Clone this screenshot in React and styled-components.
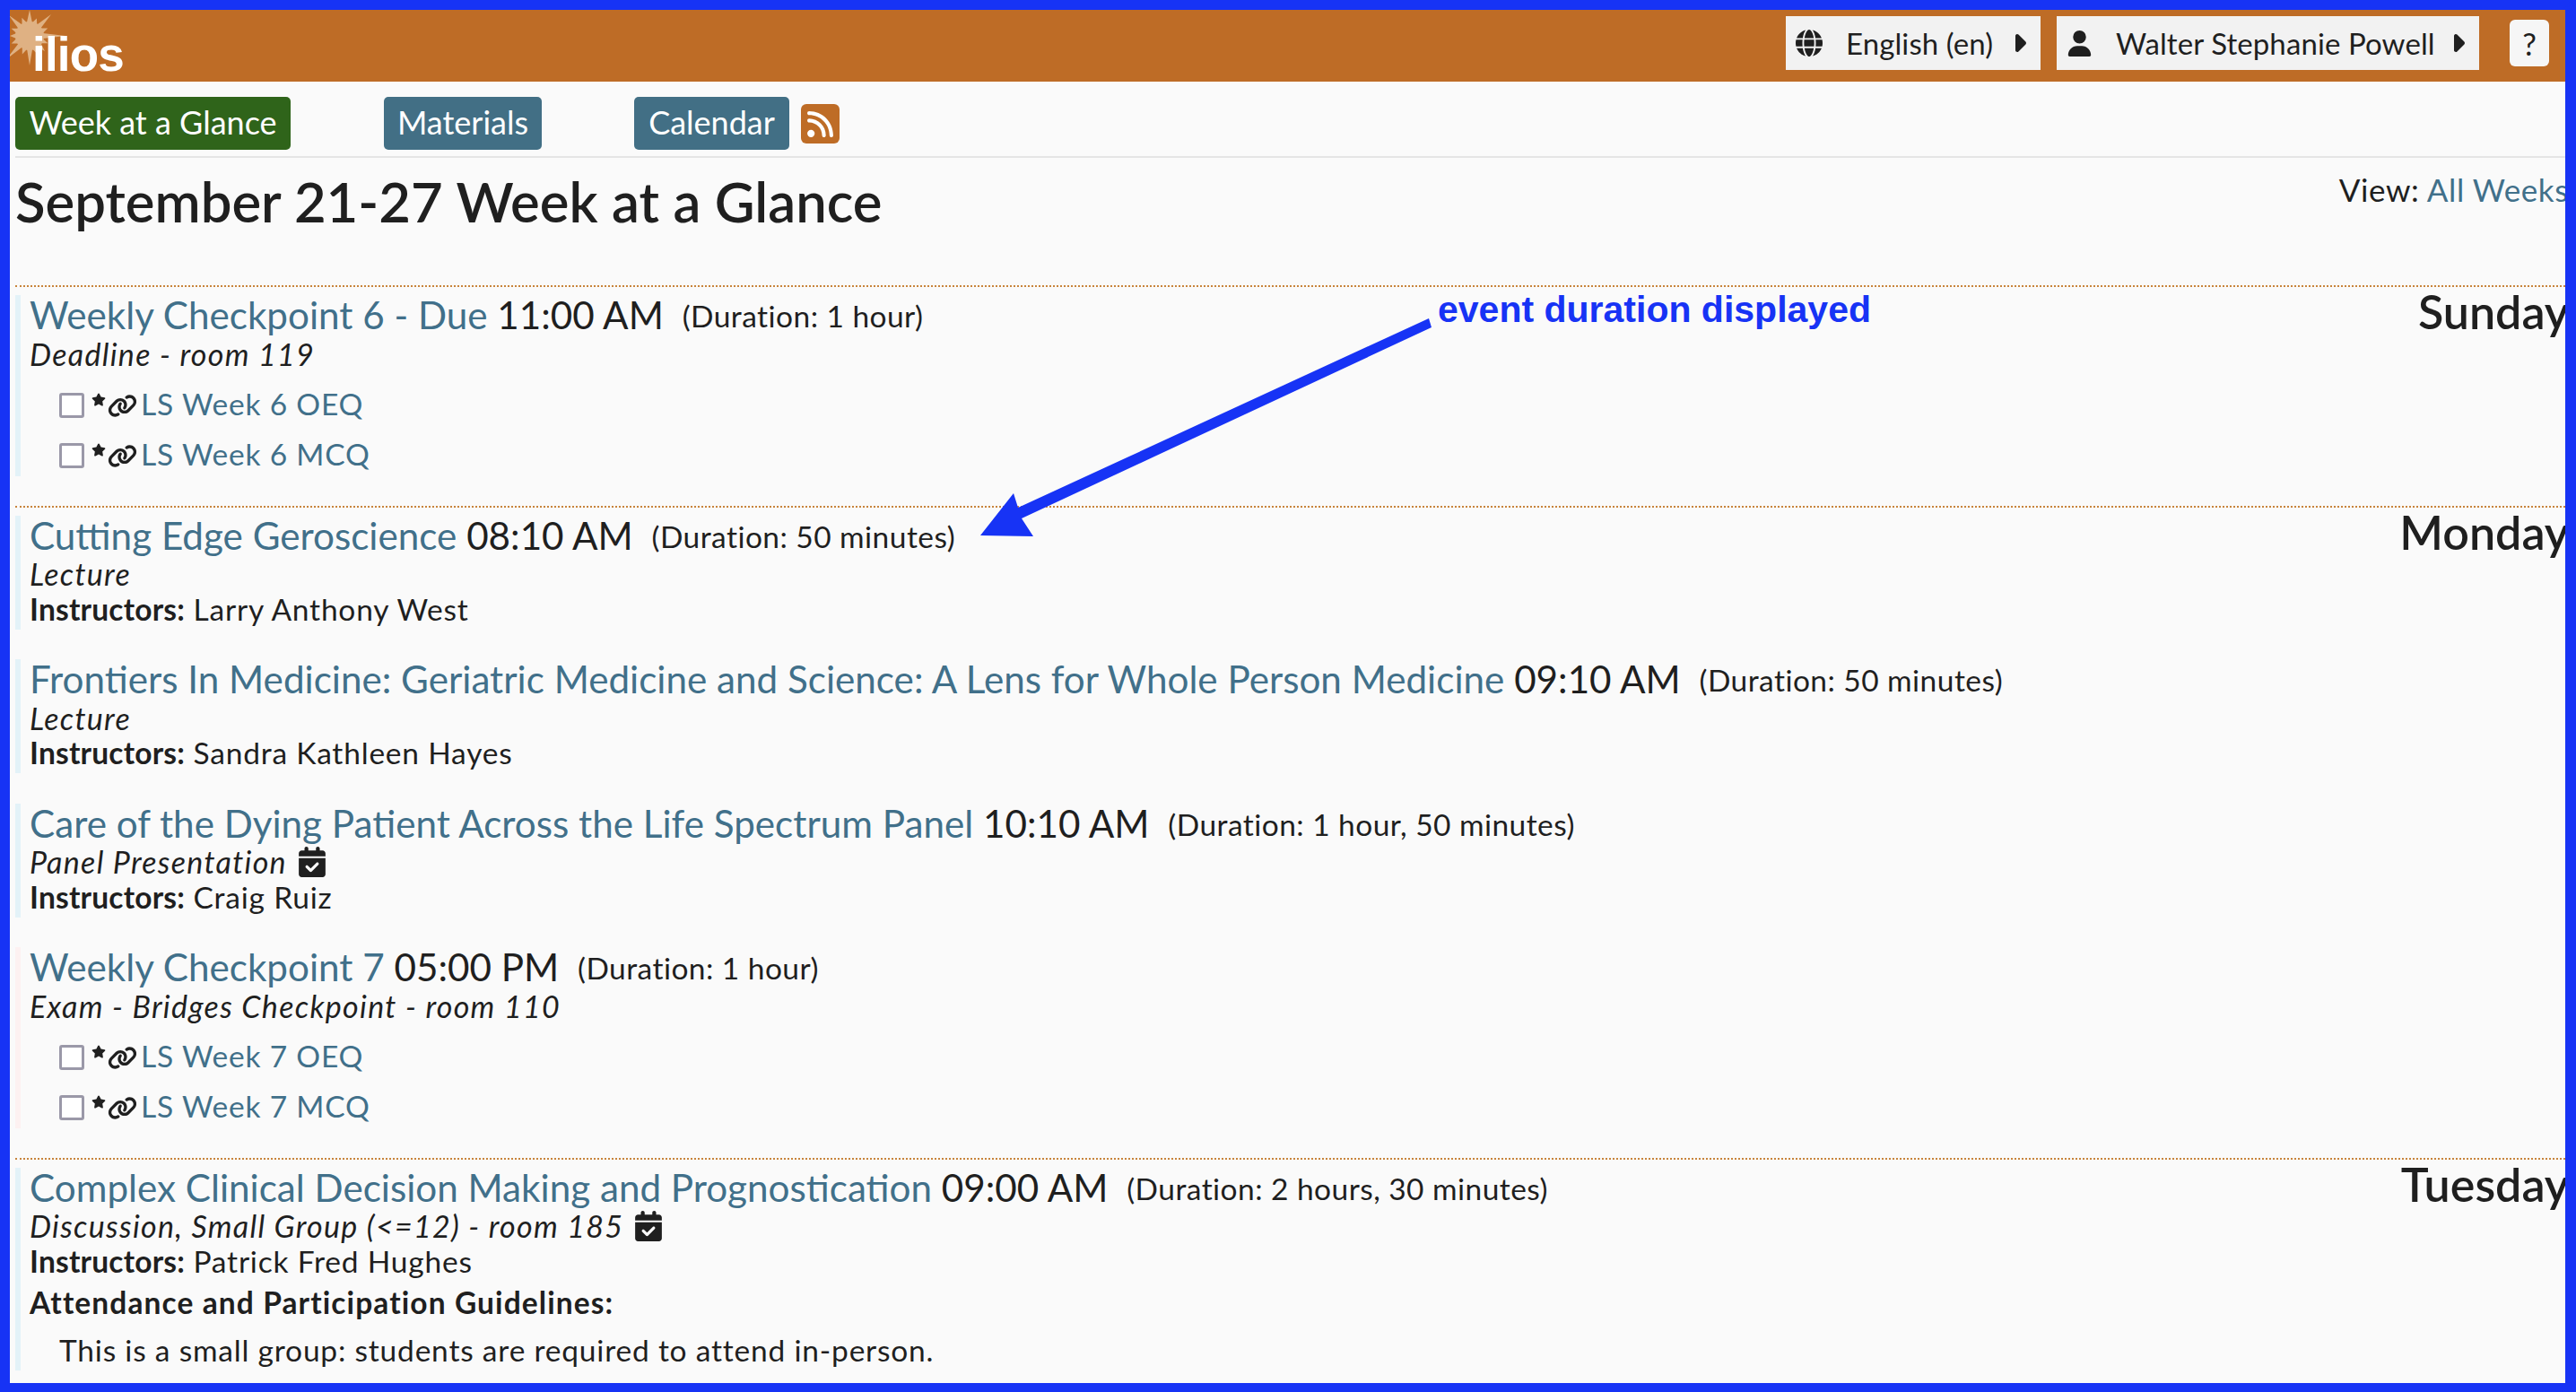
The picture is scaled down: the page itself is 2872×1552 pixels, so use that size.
import styled, { createGlobalStyle } from "styled-components";
import { FaCalendarCheck, FaCaretRight, FaGlobe, FaLink, FaRss, FaStar, FaUser } from "react-icons/fa6";

const BLUE = "#1733f5";
const LINK = "#41708a";
const INK = "#1f1f1f";

const GlobalStyle = createGlobalStyle`
  html, body { margin: 0; padding: 0; background: #fafafa; }
  body { font-family: Lato, "Noto Sans", sans-serif; color: ${INK}; }
`;

const Frame = styled.div`
  position: relative;
  box-sizing: border-box;
  width: 2872px;
  height: 1552px;
  border: solid ${BLUE};
  border-width: 11px 12px 10px 11px;
  overflow: hidden;
  background: #fafafa;
`;

const Header = styled.header`
  display: flex;
  align-items: flex-start;
  justify-content: space-between;
  height: 80px;
  background: #be6c26;
`;

const Logo = styled.div`
  position: relative;
  padding: 20px 0 0 25px;
  font: bold 53px/60px "Liberation Sans", sans-serif;
  color: #fff;
  letter-spacing: -0.8px;
`;

const Sun = styled.svg`
  position: absolute;
  left: 0;
  top: 0;
  width: 64px;
  height: 64px;
`;

const LogoText = styled.span`
  position: relative;
`;

const HeaderTools = styled.div`
  display: flex;
  align-items: flex-start;
  padding: 7px 18px 0 0;
`;

const MenuButton = styled.div`
  display: flex;
  align-items: center;
  box-sizing: border-box;
  width: ${(p) => p.$width}px;
  height: 60px;
  margin-right: ${(p) => p.$gap}px;
  padding: 0 8px 0 11px;
  background: #f2f2f2;
  font-size: 33px;
  white-space: nowrap;
`;

const MenuLabel = styled.span`
  flex: 1;
  padding-left: ${(p) => p.$indent}px;
  letter-spacing: 0.1px;
`;

const HelpButton = styled.div`
  display: flex;
  align-items: center;
  justify-content: center;
  width: 44px;
  height: 52px;
  margin-top: 4px;
  border-radius: 6px;
  background: #f6f6f6;
  font-size: 35px;
`;

const Content = styled.main`
  padding-left: 6px;
`;

const Nav = styled.nav`
  display: flex;
  align-items: flex-start;
  height: 66px;
  padding-top: 17px;
  border-bottom: 2px solid #e5e5e5;
`;

const NavButton = styled.div`
  display: flex;
  align-items: center;
  justify-content: center;
  box-sizing: border-box;
  width: ${(p) => p.$width}px;
  height: 59px;
  margin-left: ${(p) => p.$gap}px;
  padding-bottom: 3px;
  border-radius: 5px;
  background: ${(p) => (p.$active ? "#2f641a" : "#426f85")};
  color: #fff;
  font-size: 36px;
`;

const RssButton = styled.div`
  display: flex;
  align-items: center;
  justify-content: center;
  width: 43px;
  height: 44px;
  margin: 8px 0 0 13px;
  border-radius: 6px;
  background: #be6c26;
  color: #fff;
  font-size: 33px;
`;

const TitleRow = styled.div`
  display: flex;
  justify-content: space-between;
  height: 142px;
  margin-right: -4px;
`;

const Heading = styled.h1`
  margin: 12px 0 0;
  font-size: 61.6px;
  line-height: 72px;
  font-weight: 600;
`;

const ViewLink = styled.div`
  margin-top: 13px;
  font-size: 35px;
  line-height: 44px;
  letter-spacing: 0.6px;
  white-space: nowrap;
`;

const Link = styled.span`
  color: ${LINK};
`;

const Day = styled.section`
  display: flex;
  justify-content: space-between;
  margin: 0 -4px ${(p) => p.$after}px 0;
  padding-top: 9px;
  border-top: 2px dotted #c8843c;
`;

const Events = styled.div`
  display: flex;
  flex-direction: column;
  gap: 33.5px;
`;

const Event = styled.article`
  padding: 0 0 3.5px 10px;
  border-left: 6px solid ${(p) => (p.$exam ? "#fdf1f1" : "#e3f2f8")};
  font-size: 33.5px;
  line-height: 38.5px;
  letter-spacing: 0.8px;
`;

const EventTitle = styled.div`
  height: 46.5px;
  line-height: 43px;
  font-size: 42.2px;
  letter-spacing: 0;
  white-space: nowrap;
`;

const Duration = styled.span`
  margin-left: 10px;
  font-size: 33.5px;
  letter-spacing: 0.45px;
  vertical-align: 2px;
`;

const EventType = styled.div`
  display: flex;
  align-items: center;
  gap: 11px;
  font-size: 34px;
  font-style: italic;
  letter-spacing: 1.3px;
`;

const Strong = styled.strong`
  font-weight: 700;
  letter-spacing: 0.2px;
`;

const Guidelines = styled.div`
  margin-top: 8px;
  font-weight: 700;
  line-height: 38px;
  letter-spacing: 1.1px;
`;

const GuidelineText = styled.p`
  margin: 15px 0 0;
  padding-left: 33px;
`;

const QuizList = styled.div`
  display: flex;
  flex-direction: column;
  gap: 16px;
  margin: 18px 0 -1px;
`;

const Quiz = styled.label`
  display: flex;
  align-items: center;
  height: 40px;
  padding-left: 33px;
`;

const Check = styled.input`
  appearance: none;
  box-sizing: border-box;
  width: 28px;
  height: 28px;
  margin: 0 8px 0 0;
  border: 3px solid #9a98a8;
  border-radius: 3px;
  background: #fff;
`;

const StarMark = styled(FaStar)`
  width: 16px;
  height: 15px;
  margin: -14px 2px 0 0;
`;

const LinkMark = styled(FaLink)`
  width: 33px;
  height: 27px;
  margin-right: 4px;
`;

const QuizLabel = styled(Link)`
  padding-bottom: 3px;
`;

const DayName = styled.div`
  margin-top: -10px;
  font-size: 52px;
  line-height: 56px;
  font-weight: 600;
`;

const Annotation = styled.div`
  position: absolute;
  left: 1592px;
  top: 310px;
  font: bold 41px/48px "Liberation Sans", sans-serif;
  color: ${BLUE};
  white-space: nowrap;
`;

const Arrow = styled.svg`
  position: absolute;
  left: -11px;
  top: -11px;
  width: 2872px;
  height: 1552px;
  pointer-events: none;
`;

// rays of the logo sun: angle in degrees from north, length in px
const RAYS = [
  [0, 29], [22, 21], [45, 34], [67, 22], [90, 40], [112, 22], [135, 24], [157, 22],
  [180, 33], [202, 22], [225, 36], [247, 22], [270, 22], [292, 22], [315, 33], [337, 22],
];

function sunPoints() {
  const pts = [];
  RAYS.forEach(([angle, length]) => {
    const a = (angle * Math.PI) / 180;
    pts.push([22 + Math.sin(a) * length, 29 - Math.cos(a) * length]);
    const b = ((angle + 11) * Math.PI) / 180;
    pts.push([22 + Math.sin(b) * 15, 29 - Math.cos(b) * 15]);
  });
  return pts.map((p) => p.map((v) => v.toFixed(1)).join(",")).join(" ");
}

function QuizRow({ label }) {
  return (
    <Quiz>
      <Check type="checkbox" />
      <StarMark />
      <LinkMark />
      <QuizLabel>{label}</QuizLabel>
    </Quiz>
  );
}

function EventHead({ title, time, duration }) {
  return (
    <EventTitle>
      <Link>{title}</Link> {time} <Duration>(Duration: {duration})</Duration>
    </EventTitle>
  );
}

function App() {
  return (
    <>
      <GlobalStyle />
      <Frame>
        <Header>
          <Logo>
            <Sun viewBox="0 0 64 64">
              <polygon points={sunPoints()} fill="#dfb183" />
              <circle cx="22" cy="29" r="16" fill="#dfb183" />
            </Sun>
            <LogoText>ilios</LogoText>
          </Logo>
          <HeaderTools>
            <MenuButton $width={284} $gap={18}>
              <FaGlobe size={30} />
              <MenuLabel $indent={26}>English (en)</MenuLabel>
              <FaCaretRight size={32} />
            </MenuButton>
            <MenuButton $width={471} $gap={34}>
              <FaUser size={29} />
              <MenuLabel $indent={26}>Walter Stephanie Powell</MenuLabel>
              <FaCaretRight size={32} />
            </MenuButton>
            <HelpButton>?</HelpButton>
          </HeaderTools>
        </Header>
        <Content>
          <Nav>
            <NavButton $width={307} $gap={0} $active>Week at a Glance</NavButton>
            <NavButton $width={176} $gap={104}>Materials</NavButton>
            <NavButton $width={173} $gap={103}>Calendar</NavButton>
            <RssButton><FaRss /></RssButton>
          </Nav>
          <TitleRow>
            <Heading>September 21-27 Week at a Glance</Heading>
            <ViewLink>View: <Link>All Weeks</Link></ViewLink>
          </TitleRow>
          <Day $after={33}>
            <Events>
              <Event>
                <EventHead title="Weekly Checkpoint 6 - Due" time="11:00 AM" duration="1 hour" />
                <EventType>Deadline - room 119</EventType>
                <QuizList>
                  <QuizRow label="LS Week 6 OEQ" />
                  <QuizRow label="LS Week 6 MCQ" />
                </QuizList>
              </Event>
            </Events>
            <DayName>Sunday</DayName>
          </Day>
          <Day $after={33}>
            <Events>
              <Event>
                <EventHead title="Cutting Edge Geroscience" time="08:10 AM" duration="50 minutes" />
                <EventType>Lecture</EventType>
                <div><Strong>Instructors:</Strong> Larry Anthony West</div>
              </Event>
              <Event>
                <EventHead title="Frontiers In Medicine: Geriatric Medicine and Science: A Lens for Whole Person Medicine" time="09:10 AM" duration="50 minutes" />
                <EventType>Lecture</EventType>
                <div><Strong>Instructors:</Strong> Sandra Kathleen Hayes</div>
              </Event>
              <Event>
                <EventHead title="Care of the Dying Patient Across the Life Spectrum Panel" time="10:10 AM" duration="1 hour, 50 minutes" />
                <EventType>Panel Presentation <FaCalendarCheck size={34} /></EventType>
                <div><Strong>Instructors:</Strong> Craig Ruiz</div>
              </Event>
              <Event $exam>
                <EventHead title="Weekly Checkpoint 7" time="05:00 PM" duration="1 hour" />
                <EventType>Exam - Bridges Checkpoint - room 110</EventType>
                <QuizList>
                  <QuizRow label="LS Week 7 OEQ" />
                  <QuizRow label="LS Week 7 MCQ" />
                </QuizList>
              </Event>
            </Events>
            <DayName>Monday</DayName>
          </Day>
          <Day $after={0}>
            <Events>
              <Event>
                <EventHead title="Complex Clinical Decision Making and Prognostication" time="09:00 AM" duration="2 hours, 30 minutes" />
                <EventType>Discussion, Small Group (&lt;=12) - room 185 <FaCalendarCheck size={34} /></EventType>
                <div><Strong>Instructors:</Strong> Patrick Fred Hughes</div>
                <Guidelines>Attendance and Participation Guidelines:</Guidelines>
                <GuidelineText>This is a small group: students are required to attend in-person.</GuidelineText>
              </Event>
            </Events>
            <DayName>Tuesday</DayName>
          </Day>
        </Content>
        <Annotation>event duration displayed</Annotation>
        <Arrow viewBox="0 0 2872 1552">
          <polygon points="1593,355 1596,365 1139,578 1152,598 1093,597 1130,550 1135,566" fill={BLUE} />
        </Arrow>
      </Frame>
    </>
  );
}

export default App;
